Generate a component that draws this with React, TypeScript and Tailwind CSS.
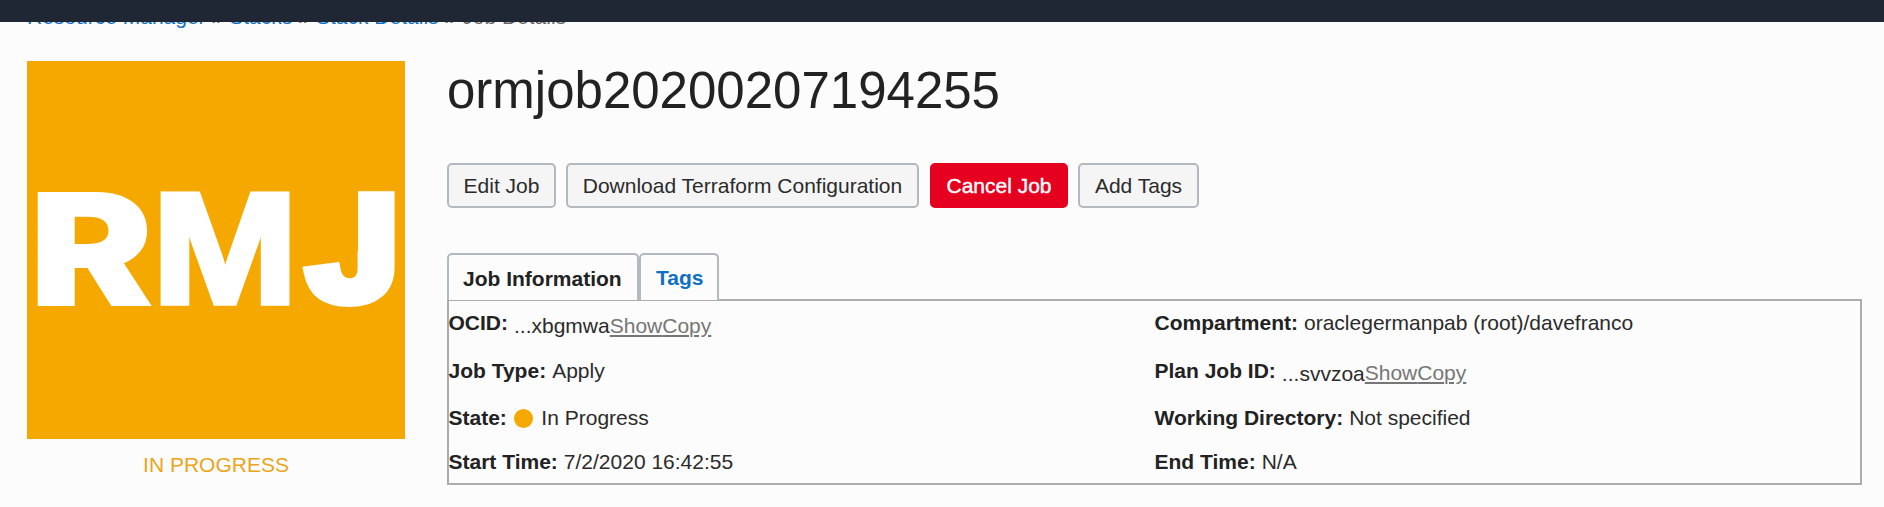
import type { ReactNode } from 'react';

function Field({ label, children, className = '' }: { label: string; children: ReactNode; className?: string }) {
  return (
    <div className={`flex h-6 items-start gap-[6px] whitespace-nowrap leading-6 ${className}`}>
      <span className="font-bold text-[#222]">{label}:</span>
      {children}
    </div>
  );
}

function Ocid({ value, linkClass = '' }: { value: string; linkClass?: string }) {
  const link = 'text-[#767676] underline decoration-2 underline-offset-2';
  return (
    <span className="mt-[3px] flex">
      <span>...{value}</span>
      <span className={`flex ${linkClass}`}>
        <a className={link}>Show</a>
        <a className={link}>Copy</a>
      </span>
    </span>
  );
}

const buttonBase = 'h-[45px] rounded-[5px] border-2 text-[21px] leading-6';

export default function App() {
  return (
    <div className="h-[507px] w-[1884px] overflow-hidden bg-[#fcfcfc] font-['Liberation_Sans',Arial,sans-serif] text-[21px] text-[#2b2b2b]">
      <header className="relative z-10 h-[22px] bg-[#1e2733]" />
      <nav className="-mt-[17px] flex h-6 gap-[6px] whitespace-nowrap pl-[27px] leading-6 text-[#666]">
        <a className="text-[#0f70c4]">Resource Manager</a>
        <span>»</span>
        <a className="text-[#0f70c4]">Stacks</a>
        <span>»</span>
        <a className="text-[#0f70c4]">Stack Details</a>
        <span>»</span>
        <span>Job Details</span>
      </nav>
      <main className="flex pl-[27px] pt-[32px]">
        <aside className="w-[378px] shrink-0">
          <svg width="378" height="378" viewBox="0 0 378 378" className="block bg-[#f5a800]">
            <defs>
              {/* trims the serif off the top of the J */}
              <clipPath id="j-stem">
                <path d="M331 120H378V260H265V190H331Z" />
              </clipPath>
            </defs>
            <text x="2" y="245" textLength="125" lengthAdjust="spacingAndGlyphs" fill="#fff" fontFamily="Inter, sans-serif" fontWeight="900" fontSize="157">R</text>
            <g fill="#fff" stroke="#fff" fontFamily="Liberation Sans, Arial, sans-serif" fontWeight="700">
              <text transform="translate(125.1 242) scale(1.117 1)" fontSize="157" strokeWidth="5.5">M</text>
              <g clipPath="url(#j-stem)">
                <text transform="translate(280.7 239) scale(1.11 1)" fontSize="148" strokeWidth="12">J</text>
              </g>
            </g>
          </svg>
          <p className="mt-[14px] text-center leading-6 text-[#eba51b]">IN PROGRESS</p>
        </aside>
        <section className="ml-[42px] w-[1415px]">
          <h1 className="h-[102px] text-[51px] leading-[60px] text-[#222]">ormjob20200207194255</h1>
          <div className="flex gap-[10px]">
            <button className={`${buttonBase} w-[109px] border-[#b3b9c0] bg-[#f5f5f5]`}>Edit Job</button>
            <button className={`${buttonBase} mr-px w-[353px] whitespace-nowrap border-[#b3b9c0] bg-[#f5f5f5] px-0`}>
              Download Terraform Configuration
            </button>
            <button className={`${buttonBase} w-[138px] border-[#e6001f] bg-[#e6001f] text-white [-webkit-text-stroke:0.4px_white]`}>Cancel Job</button>
            <button className={`${buttonBase} w-[121px] border-[#b3b9c0] bg-[#f5f5f5]`}>Add Tags</button>
          </div>
          <div className="relative z-10 -mb-px mt-[45px] flex h-[47px] font-bold">
            <div className="h-[47px] w-[192px] rounded-t-[5px] border-2 border-b-0 border-[#b3b9c0] bg-[#fcfcfc] pl-[14px] pt-[12px] leading-6 text-[#222]">
              Job Information
            </div>
            <div className="h-[47px] w-[80px] rounded-t-[5px] border-2 border-b-0 border-[#b3b9c0] bg-[#fcfcfc] pl-[15px] pt-[11px] leading-6 text-[#0f70c4]">
              Tags
            </div>
          </div>
          <div className="h-[186px] border-2 border-[#acacac] pt-[10px]">
            <div className="grid grid-cols-2 grid-rows-[48px_47px_44px_24px]">
              <Field label="OCID" className="-ml-[0.5px]"><Ocid value="xbgmwa" /></Field>
              <Field label="Compartment">oraclegermanpab (root)/davefranco</Field>
              <Field label="Job Type" className="-ml-[0.5px]">Apply</Field>
              <Field label="Plan Job ID"><Ocid value="svvzoa" linkClass="-mt-px" /></Field>
              <Field label="State" className="-ml-[0.5px]">
                <span className="ml-[1.5px] mr-[2px] mt-[3px] size-[19px] rounded-full bg-[#f5a800]" />
                In Progress
              </Field>
              <Field label="Working Directory">Not specified</Field>
              <Field label="Start Time" className="-ml-[0.5px]">7/2/2020 16:42:55</Field>
              <Field label="End Time">N/A</Field>
            </div>
          </div>
        </section>
      </main>
    </div>
  );
}
